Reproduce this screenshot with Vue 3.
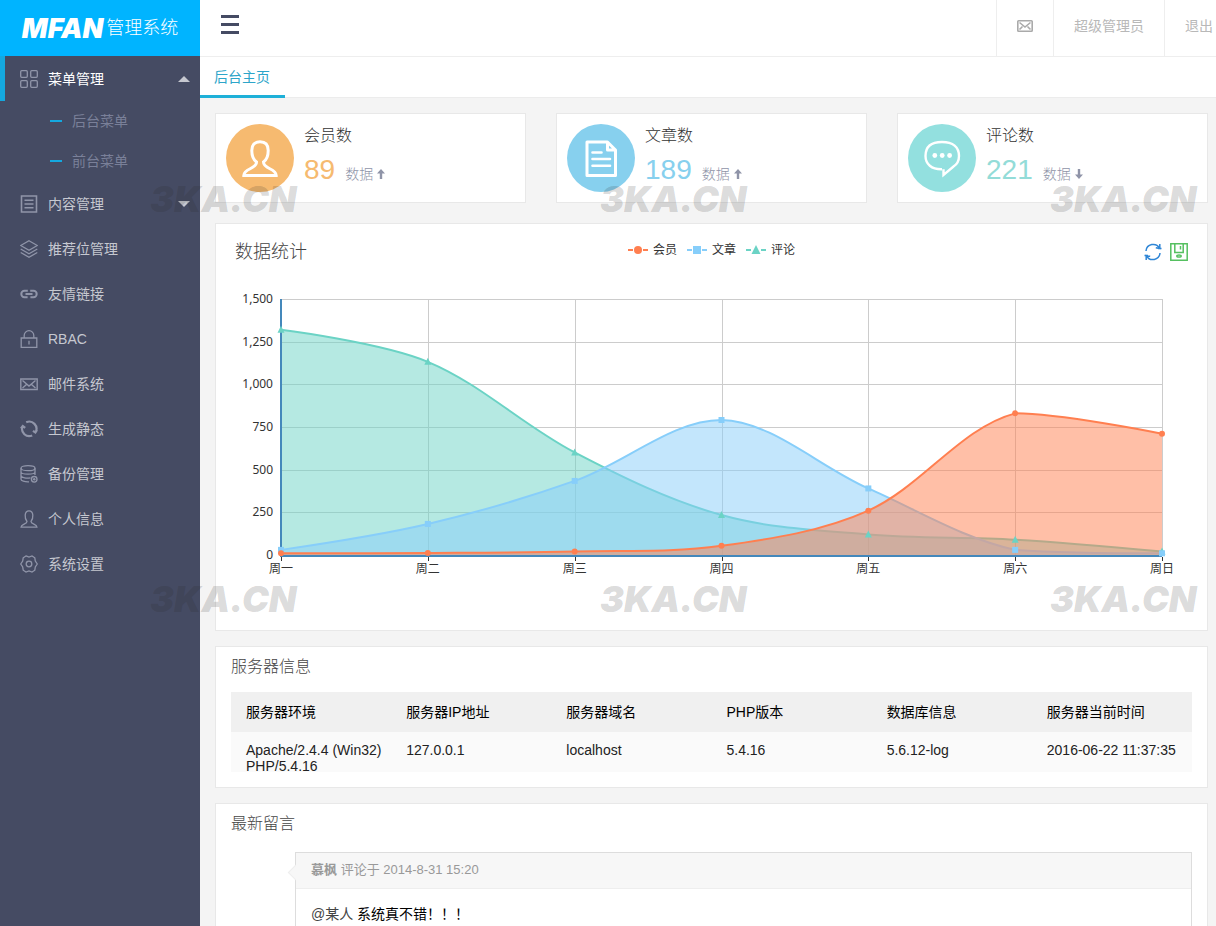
<script setup>
import { computed } from 'vue'

const menu = [
  { icon: 'grid', text: '菜单管理', open: true, children: ['后台菜单', '前台菜单'] },
  { icon: 'doc', text: '内容管理', more: true },
  { icon: 'layers', text: '推荐位管理' },
  { icon: 'link', text: '友情链接' },
  { icon: 'lock', text: 'RBAC' },
  { icon: 'mail', text: '邮件系统' },
  { icon: 'cycle', text: '生成静态' },
  { icon: 'db', text: '备份管理' },
  { icon: 'person', text: '个人信息' },
  { icon: 'gear', text: '系统设置' }
]

const stats = [
  { kind: 'member', title: '会员数', value: 89, up: true },
  { kind: 'article', title: '文章数', value: 189, up: true },
  { kind: 'comment', title: '评论数', value: 221, up: false }
]

const server = [
  ['服务器环境', 'Apache/2.4.4 (Win32) PHP/5.4.16'],
  ['服务器IP地址', '127.0.0.1'],
  ['服务器域名', 'localhost'],
  ['PHP版本', '5.4.16'],
  ['数据库信息', '5.6.12-log'],
  ['服务器当前时间', '2016-06-22 11:37:35']
]

const days = ['周一', '周二', '周三', '周四', '周五', '周六', '周日']
const ticks = [0, 250, 500, 750, 1000, 1250, 1500]
const plot = { left: 65, right: 946, top: 15, bottom: 271 }
const series = [
  { name: '评论', color: '#6bd3c5', shape: 'triangle', data: [1320, 1132, 601, 234, 120, 90, 20] },
  { name: '文章', color: '#87cefa', shape: 'square', data: [30, 182, 434, 791, 390, 30, 10] },
  { name: '会员', color: '#ff7f50', shape: 'circle', data: [10, 12, 21, 54, 260, 830, 710] }
]

const px = (i) => plot.left + ((plot.right - plot.left) * i) / (days.length - 1)
const py = (v) => plot.bottom - ((plot.bottom - plot.top) * v) / 1500

// Control points follow the chord between neighbours, kept within the series' own range.
function spline(points, smooth = 0.34) {
  const ys = points.map((p) => p[1])
  const lo = Math.min(...ys)
  const hi = Math.max(...ys)
  const clamp = (y) => Math.min(hi, Math.max(lo, y))
  const dist = (a, b) => Math.hypot(a[0] - b[0], a[1] - b[1])
  const handles = points.map((p, i) => {
    if (i === 0 || i === points.length - 1) return [p, p]
    const a = points[i - 1]
    const b = points[i + 1]
    const d0 = dist(p, a)
    const d1 = dist(p, b)
    const vx = (b[0] - a[0]) * smooth
    const vy = (b[1] - a[1]) * smooth
    const k0 = d0 / (d0 + d1)
    const k1 = d1 / (d0 + d1)
    return [
      [p[0] - vx * k0, clamp(p[1] - vy * k0)],
      [p[0] + vx * k1, clamp(p[1] + vy * k1)]
    ]
  })
  let d = `M${points[0].join(' ')}`
  for (let i = 1; i < points.length; i++) {
    d += ` C${handles[i - 1][1].join(' ')} ${handles[i][0].join(' ')} ${points[i].join(' ')}`
  }
  return d
}

const curves = computed(() =>
  series.map((s) => {
    const points = s.data.map((v, i) => [px(i), py(v)])
    const line = spline(points)
    return { ...s, points, line, area: `${line} L${plot.right} ${plot.bottom} L${plot.left} ${plot.bottom} Z` }
  })
)
const legend = [...series].reverse()
</script>

<template>
  <div class="app">
    <aside class="side">
      <a class="logo" href="#"><b>MFAN</b><span>管理系统</span></a>
      <nav>
        <ul class="menu">
          <li v-for="m in menu" :key="m.text">
            <a href="#" class="item" :class="{ active: m.open }">
              <svg class="ico" viewBox="0 0 18 18" width="18" height="18" aria-hidden="true">
                <g v-if="m.icon === 'grid'">
                  <rect x=".7" y=".7" width="6.6" height="6.6" rx="1" /><rect x="10.7" y=".7" width="6.6" height="6.6" rx="1" />
                  <rect x=".7" y="10.7" width="6.6" height="6.6" rx="1" /><rect x="10.7" y="10.7" width="6.6" height="6.6" rx="1" />
                </g>
                <path v-else-if="m.icon === 'doc'" d="M1.5 1H16.5V17H1.5ZM4.5 5.2H13.5M4.5 9H13.5M4.5 12.8H13.5" stroke-width="1.6" />
                <path v-else-if="m.icon === 'layers'" d="M9 .8L17.3 5.5L9 10.2L.7 5.5ZM.7 9L9 13.7L17.3 9M.7 12.5L9 17.2L17.3 12.5" />
                <path v-else-if="m.icon === 'link'" d="M7.8 5.8H4.5A3.2 3.2 0 0 0 4.5 12.2H7.6M10.2 5.8H13.5A3.2 3.2 0 0 1 13.5 12.2H10.4M5.5 9H12.5" stroke-width="2" />
                <path v-else-if="m.icon === 'lock'" d="M1.2 8H16.8V17.3H1.2ZM4.2 8V5.5A4.8 4.8 0 0 1 13.8 5.5V8M9 10.8V14.5" />
                <path v-else-if="m.icon === 'mail'" d="M.8 4H17.2V14.5H.8ZM2.5 5.5L9 11L15.5 5.5M2.5 13L6.5 9.5M15.5 13L11.5 9.5" stroke-width="1.4" />
                <path v-else-if="m.icon === 'cycle'" d="M6.2 2.3A7.2 7.2 0 0 1 15.6 12.2M12.2 15.5A7.2 7.2 0 0 1 2.5 6.5M1 8.5L2.8 6L5.2 7.8M17 10L15.4 12.5L13 10.8" stroke-width="2.200" />
                <g v-else-if="m.icon === 'db'">
                  <ellipse cx="8" cy="3.2" rx="7" ry="2.5" />
                  <path d="M1 3.2V14.3C1 15.8 4.5 17 9 16.8M15 3.2V10M1 7C1.5 9.8 14.5 9.8 15 7M1 10.7C1.5 13 7 13.5 10.5 12.8" />
                  <circle cx="14.2" cy="14.3" r="2.8" /><path d="M14.2 13V15.6M12.9 14.3H15.5" />
                </g>
                <path v-else-if="m.icon === 'person'" d="M1 17.2C1 14.2 7 14.2 7 11.5C4.5 8.500 4 .8 9 .8S13.500 8.500 11 11.5C11 14.2 17 14.2 17 17.2Z" />
                <g v-else>
                  <path d="M6 .9L9 2L12 .9L14.8 2.8L15.3 6L17.3 9L15.3 12L14.8 15.2L12 17.1L9 16L6 17.1L3.2 15.2L2.7 12L.7 9L2.7 6L3.2 2.8Z" /><circle cx="9" cy="9" r="2.8" />
                </g>
              </svg>
              <span>{{ m.text }}</span>
              <i v-if="m.open" class="caret up"></i>
              <i v-else-if="m.more" class="caret"></i>
            </a>
            <ul v-if="m.children" class="sub">
              <li v-for="c in m.children" :key="c"><a href="#">{{ c }}</a></li>
            </ul>
          </li>
        </ul>
      </nav>
    </aside>

    <div class="body">
      <header class="top">
        <button class="burger" type="button" aria-label="菜单"><i></i><i></i><i></i></button>
        <nav class="user">
          <a href="#" aria-label="邮件">
            <svg viewBox="0 0 16 12" width="16" height="12" fill="none" stroke="#aaa" stroke-width="1.6"><rect x=".8" y=".8" width="14.4" height="10.4" rx=".8" /><path d="M2.5 2.5L8 7L13.5 2.5M2.5 9.5L5.5 6.5M13.5 9.5L10.5 6.5" /></svg>
          </a>
          <a href="#">超级管理员</a>
          <a href="#" class="exit">退出</a>
        </nav>
      </header>
      <div class="tabs"><a href="#">后台主页</a></div>

      <main class="content">
        <section class="stats">
          <article v-for="s in stats" :key="s.kind" class="stat" :class="s.kind">
            <div class="disc">
              <svg viewBox="0 0 40 40" width="40" height="40" fill="none" stroke="#fff" stroke-width="3" aria-hidden="true">
                <path v-if="s.kind === 'member'" d="M3.8 37.5C3.8 30 16.5 31.5 16.5 24C12.5 21 11.8 16 11.8 12.500C11.8 7 14.5 3.800 20 3.800S28.200 7 28.200 12.500C28.200 16 27.500 21 23.500 24C23.500 31.5 36.2 30 36.2 37.5Z" />
                <g v-else-if="s.kind === 'article'" stroke-linejoin="round">
                  <path d="M6 4H26.5L34.500 12V37.500H6ZM26.500 4V12H34.500" /><path d="M11.500 14.500H20.500M11.500 21H29M11.500 27.800H29" stroke-width="2.600" stroke-linecap="round" />
                </g>
                <g v-else>
                  <path d="M20 31.2C9.500 31.500 3.500 26 3.500 18C3.500 9 9 4 20 4S37 9 37 18C37 22 35.500 26 31.500 28.500L21.500 37V31.200" stroke-width="2.400" />
                  <g fill="#fff" stroke="none"><circle cx="12.8" cy="17.5" r="2.4" /><circle cx="20.2" cy="17.5" r="2.4" /><circle cx="27.6" cy="17.5" r="2.4" /></g>
                </g>
              </svg>
            </div>
            <div class="info">
              <h3>{{ s.title }}</h3>
              <p>
                <strong>{{ s.value }}</strong><span>数据</span>
                <svg class="arrow" :class="{ down: !s.up }" viewBox="0 0 8 10" width="8" height="10" aria-hidden="true"><path d="M4 0L8 4.5H5.2V10H2.8V4.500H0Z" fill="#8f94a8" /></svg>
              </p>
            </div>
          </article>
        </section>

        <section class="panel chart">
          <div class="chart-head">
            <h2>数据统计</h2>
            <ul class="legend">
              <li v-for="l in legend" :key="l.name">
                <svg viewBox="0 0 20 10" width="20" height="10" :fill="l.color" :stroke="l.color" aria-hidden="true">
                  <path d="M0 5H5M15 5H20" stroke-width="2" />
                  <circle v-if="l.shape === 'circle'" cx="10" cy="5" r="4" stroke="none" />
                  <rect v-else-if="l.shape === 'square'" x="6" y="1" width="8" height="8" stroke="none" />
                  <path v-else d="M10 0L14.5 9H5.5Z" stroke="none" />
                </svg>
                <span>{{ l.name }}</span>
              </li>
            </ul>
            <div class="tools">
              <button type="button" aria-label="还原">
                <svg viewBox="0 0 18 18" width="18" height="18" fill="none" stroke="#2f86d6" stroke-width="1.5"><path d="M2 8A7.2 7.2 0 0 1 15.5 5.2M16 10A7.2 7.2 0 0 1 2.5 12.8M15.8 1V5.5L11.8 4.8M17.5 5.5H14M2.2 17V12.5L6.2 13.2M.5 12.5H4" /></svg>
              </button>
              <button type="button" aria-label="保存">
                <svg viewBox="0 0 18 18" width="18" height="18" fill="none" stroke="#55c060" stroke-width="1.5"><path d="M.8 .8H17.2V17.2H.8ZM4.8 1V9.5H13.2V1M10.500 3V6.5" /><ellipse cx="9" cy="13" rx="2.2" ry="1.1" /></svg>
              </button>
            </div>
          </div>
          <svg class="plot" viewBox="0 0 991 346" role="img" aria-label="数据统计">
            <g class="grid">
              <path v-for="t in ticks" :key="t" :d="`M${plot.left} ${Math.round(py(t)) + 0.5}H${plot.right}`" />
              <path v-for="(d, i) in days" :key="d" :d="`M${Math.round(px(i)) + 0.5} ${plot.top}V${plot.bottom}`" />
            </g>
            <g v-for="c in curves" :key="c.name">
              <path :d="c.area" :fill="c.color" fill-opacity=".5" />
              <path :d="c.line" :stroke="c.color" stroke-width="2" fill="none" />
            </g>
            <path class="axis" :d="`M${plot.left} ${plot.top}V${plot.bottom + 1}H${plot.right}`" />
            <path v-for="(d, i) in days" :key="d" class="tick" :d="`M${Math.round(px(i)) + 0.5} ${plot.bottom + 2}v4`" />
            <g v-for="c in curves" :key="c.name" :fill="c.color">
              <template v-for="(p, i) in c.points" :key="i">
                <circle v-if="c.shape === 'circle'" :cx="p[0]" :cy="p[1]" r="3" />
                <rect v-else-if="c.shape === 'square'" :x="p[0] - 3" :y="p[1] - 3" width="6" height="6" />
                <path v-else :d="`M${p[0]} ${p[1] - 4}l3.5 7h-7Z`" />
              </template>
            </g>
            <g class="labels">
              <text v-for="t in ticks" :key="t" x="57" :y="py(t) + 4" text-anchor="end">{{ t.toLocaleString('en-US') }}</text>
              <text v-for="(d, i) in days" :key="d" :x="px(i)" y="289" text-anchor="middle">{{ d }}</text>
            </g>
          </svg>
        </section>

        <section class="panel">
          <h2>服务器信息</h2>
          <table>
            <thead><tr><th v-for="s in server" :key="s[0]" scope="col">{{ s[0] }}</th></tr></thead>
            <tbody><tr><td v-for="s in server" :key="s[0]"><div>{{ s[1] }}</div></td></tr></tbody>
          </table>
        </section>

        <section class="panel">
          <h2>最新留言</h2>
          <article class="reply">
            <header><b>慕枫</b> 评论于 2014-8-31 15:20</header>
            <p><a href="#">@某人</a> 系统真不错！！！</p>
          </article>
        </section>
      </main>
    </div>

    <div class="marks" aria-hidden="true"><span v-for="n in 6" :key="n">3KA.CN</span></div>
  </div>
</template>

<style>
body { margin: 0; }
</style>

<style scoped>
* { box-sizing: border-box; }
ul { list-style: none; margin: 0; padding: 0; }
h2, h3, p { margin: 0; font-weight: 300; }
a { color: inherit; text-decoration: none; }
button { border: 0; padding: 0; background: none; cursor: pointer; }

.app {
  position: relative;
  display: flex;
  height: 100vh;
  overflow: hidden;
  background: #f4f4f4;
  color: #000;
  font: 400 14px/20px "Liberation Sans", "Noto Sans CJK SC", sans-serif;
}

.side { flex: 0 0 200px; background: #454b63; }
.logo {
  display: flex;
  align-items: center;
  justify-content: center;
  gap: 3px;
  height: 56px;
  background: #00b4ff;
  color: #fff;
}
.logo b { font: italic 900 27px/27px Inter, sans-serif; }
.logo span { font-size: 18px; font-weight: 300; }
.item {
  display: flex;
  align-items: center;
  gap: 10px;
  height: 45px;
  padding: 0 10px 0 15px;
  border-left: 5px solid transparent;
  color: #c6c8d0;
}
.item.active { border-color: #14a8df; color: #fff; }
.ico { fill: none; stroke: #9095a9; stroke-width: 1.3; }
.caret {
  margin-left: auto;
  border: 6px solid transparent;
  border-top-color: #c6c8d0;
  border-bottom: 0;
}
.caret.up { border-top: 0; border-bottom: 6px solid #c6c8d0; }
.sub a {
  display: flex;
  align-items: center;
  gap: 10px;
  height: 40px;
  padding-left: 50px;
  color: #7a8099;
}
.sub a::before { content: ""; width: 12px; height: 2px; background: #14a8df; }

.body { flex: 1; min-width: 0; display: flex; flex-direction: column; }
.top {
  flex: none;
  display: flex;
  justify-content: space-between;
  height: 57px;
  padding-left: 21px;
  background: #fff;
  border-bottom: 1px solid #eee;
}
.burger { align-self: center; display: grid; gap: 5px; width: 18px; padding-bottom: 7px; }
.burger i { height: 3px; background: #454b63; }
.user { display: flex; }
.user a {
  display: flex;
  align-items: center;
  padding: 0 20px;
  padding-bottom: 4px;
  border-left: 1px solid #eee;
  color: #b8b8b8;
}
.user .exit { padding-right: 3px; }
.tabs { flex: none; display: flex; height: 41px; background: #fff; border-bottom: 1px solid #ececec; }
.tabs a {
  height: 41px;
  padding: 0 15px 0 14px;
  border-bottom: 3px solid #1eb0d8;
  color: #2da5c9;
  line-height: 40px;
}

.content {
  flex: 1;
  min-height: 0;
  overflow: auto;
  scrollbar-width: none;
  padding: 15px 8px 15px 15px;
}
.stats { display: grid; grid-template-columns: repeat(3, 1fr); gap: 30px; margin-bottom: 20px; }
.stat { display: flex; gap: 10px; padding: 10px; background: #fff; border: 1px solid #e8e8e8; }
.disc { display: grid; place-items: center; width: 68px; height: 68px; border-radius: 50%; }
.member .disc { background: #f6ba70; }
.article .disc { background: #87d0ee; }
.comment .disc { background: #93e0df; }
.member strong { color: #f6ba70; }
.article strong { color: #87d0ee; }
.comment strong { color: #93dcd8; }
.info h3 { font-size: 16px; line-height: 24px; color: #333; }
.info p { display: flex; align-items: baseline; margin-top: 6px; color: #8f94a8; }
.info strong { margin-right: 10px; font-size: 28px; line-height: 32px; font-weight: 400; }
.arrow { margin-left: 4px; }
.arrow.down { transform: rotate(180deg); }

.panel { margin-bottom: 15px; padding: 0 15px 15px; background: #fff; border: 1px solid #e8e8e8; }
.panel h2 { margin-bottom: 5px; font-size: 16px; line-height: 40px; color: #444; }
.panel.chart { padding: 0; }
.chart-head {
  display: grid;
  grid-template-columns: 1fr auto 1fr;
  align-items: center;
  height: 60px;
  padding: 0 19px 4px;
}
.panel .chart-head h2 { margin: 0; font-size: 18px; }
.legend { display: flex; gap: 10px; padding-bottom: 4px; font-size: 12px; color: #333; }
.legend li { display: flex; align-items: center; gap: 5px; }
.tools { display: flex; justify-content: flex-end; gap: 8px; }
.tools button { height: 18px; }
.tools svg, .plot { display: block; }
.plot { width: 100%; }
.grid { fill: none; stroke: #ccc; }
.axis { fill: none; stroke: #48b; stroke-width: 2; }
.tick { stroke: #333; }
.labels { font: 12px "Noto Sans", "Noto Sans CJK SC", sans-serif; fill: #333; }

table { width: 100%; border-collapse: collapse; table-layout: fixed; }
th { height: 40px; padding: 0 15px; background: #f0f0f0; text-align: left; font-weight: 400; }
td { padding: 10px 0 0 15px; background: #fafafa; vertical-align: top; color: #222; }
td div { height: 30px; line-height: 16px; }

.reply { position: relative; margin: 8px 0 0 64px; border: 1px solid #ddd; }
.reply header {
  height: 36px;
  padding: 0 15px;
  background: #f7f7f7;
  border-bottom: 1px solid #eee;
  color: #999;
  font-size: 13px;
  line-height: 34px;
}
.reply header::before {
  content: "";
  position: absolute;
  left: -6px;
  top: 14px;
  width: 10px;
  height: 10px;
  background: #f7f7f7;
  border: 1px solid #eee;
  border-width: 0 0 1px 1px;
  transform: rotate(45deg);
}
.reply p { padding: 15px; font-weight: 400; }
.reply p a { color: #444; }

.marks {
  position: absolute;
  inset: 180px 0 auto 150px;
  display: grid;
  grid-template-columns: repeat(3, 450px);
  grid-auto-rows: 400px;
  pointer-events: none;
  color: rgba(40, 40, 40, .18);
  font: italic 900 36px/38px Inter, sans-serif;
}
</style>
